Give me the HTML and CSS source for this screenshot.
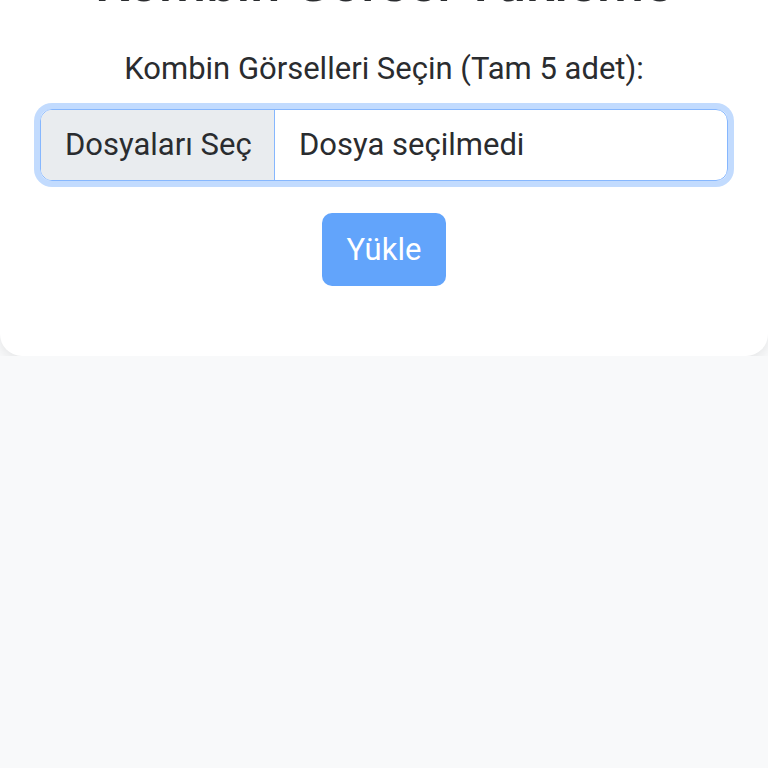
FILE: index.html
```html
<!DOCTYPE html>
<html lang="tr">
<head>
    <meta charset="UTF-8">
    <meta name="viewport" content="width=device-width, initial-scale=1.0">
    <title>Kombin Görsel Yükleme</title>
    <link rel="stylesheet" href="styles.css">
</head>
<body>
    <div class="card">
        <h1>Kombin Görsel Yükleme</h1>

        <!-- Upload form -->
        <form class="upload-form" onsubmit="return false;">
            <label for="images" class="form-label">Kombin Görselleri Seçin (Tam 5 adet):</label>
            <div class="file-input">
                <span class="file-btn">Dosyaları Seç</span>
                <span class="file-name">Dosya seçilmedi</span>
            </div>
            <button type="submit" class="btn-primary">Yükle</button>
        </form>
    </div>
</body>
</html>
```

FILE: styles.css
```css
body {
    margin: 0;
    background-color: #f8f9fa;
    font-family: Roboto, "Noto Sans", Arial, sans-serif;
    color: #2a2c2f;
}
.card {
    background-color: #fff;
    margin-top: -52px;
    padding: 0 40px 70px;
    border-radius: 0 0 22px 22px;
    box-shadow: 0 4px 12px rgba(0, 0, 0, 0.08);
    text-align: center;
}
h1 {
    margin: 0 0 28px;
    font-size: 54px;
    font-weight: 500;
    line-height: 1.3;
}
.form-label {
    display: block;
    font-size: 31px;
    line-height: 1.5;
    margin-bottom: 16px;
}
.file-input {
    display: flex;
    height: 72px;
    box-sizing: border-box;
    border: 1px solid #86b7fe;
    border-radius: 12px;
    box-shadow: 0 0 0 6px #c2dbfe;
    overflow: hidden;
    font-size: 31px;
    text-align: left;
    white-space: nowrap;
}
.file-btn {
    display: flex;
    align-items: center;
    flex: none;
    box-sizing: border-box;
    width: 234px;
    padding: 0 24px;
    background-color: #e9ecef;
    border-right: 1px solid #86b7fe;
}
.file-name {
    display: flex;
    align-items: center;
    padding: 0 24px;
    background-color: #fff;
}
.btn-primary {
    margin-top: 32px;
    height: 73px;
    padding: 0 25px;
    border: none;
    border-radius: 10px;
    background-color: #62a4fb;
    color: #fff;
    font-family: inherit;
    font-size: 31px;
    cursor: pointer;
}
```
